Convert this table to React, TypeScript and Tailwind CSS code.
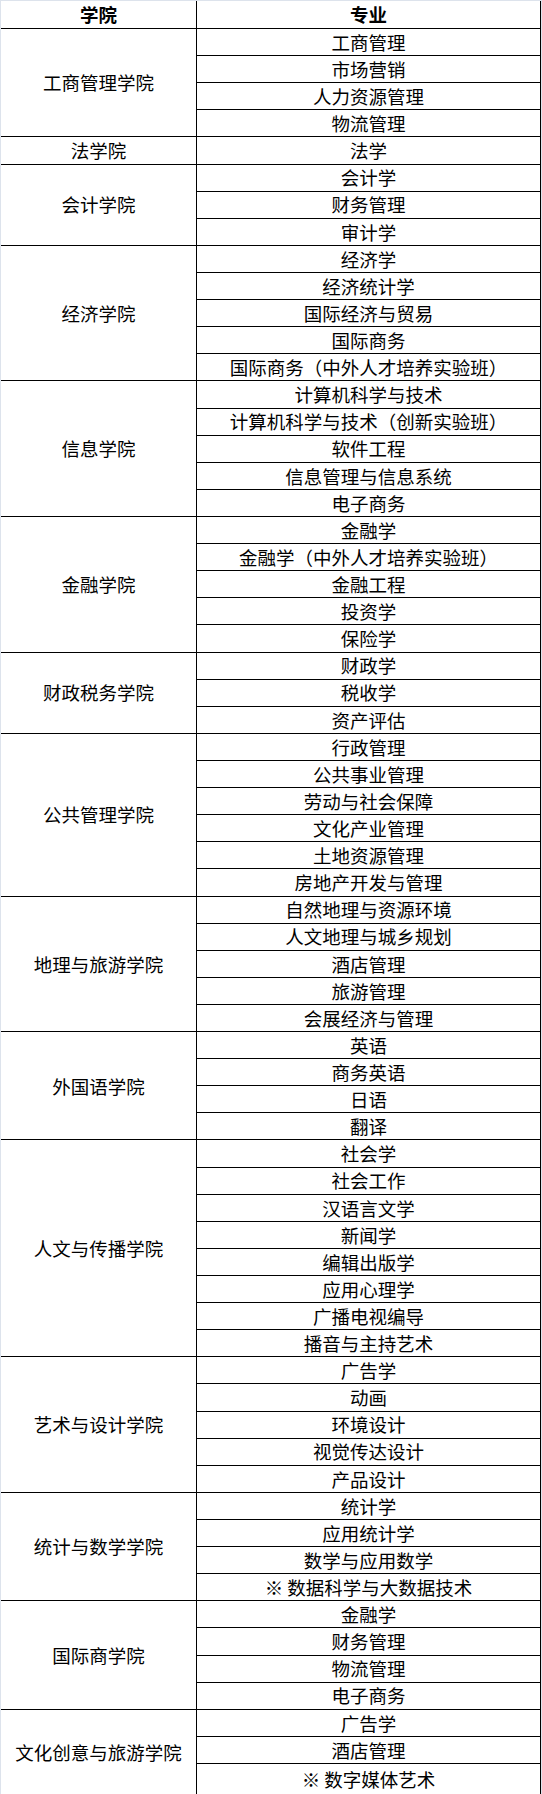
const groups: { college: string; majors: string[] }[] = [
  { college: "工商管理学院", majors: ["工商管理", "市场营销", "人力资源管理", "物流管理"] },
  { college: "法学院", majors: ["法学"] },
  { college: "会计学院", majors: ["会计学", "财务管理", "审计学"] },
  {
    college: "经济学院",
    majors: ["经济学", "经济统计学", "国际经济与贸易", "国际商务", "国际商务（中外人才培养实验班）"],
  },
  {
    college: "信息学院",
    majors: ["计算机科学与技术", "计算机科学与技术（创新实验班）", "软件工程", "信息管理与信息系统", "电子商务"],
  },
  {
    college: "金融学院",
    majors: ["金融学", "金融学（中外人才培养实验班）", "金融工程", "投资学", "保险学"],
  },
  { college: "财政税务学院", majors: ["财政学", "税收学", "资产评估"] },
  {
    college: "公共管理学院",
    majors: ["行政管理", "公共事业管理", "劳动与社会保障", "文化产业管理", "土地资源管理", "房地产开发与管理"],
  },
  {
    college: "地理与旅游学院",
    majors: ["自然地理与资源环境", "人文地理与城乡规划", "酒店管理", "旅游管理", "会展经济与管理"],
  },
  { college: "外国语学院", majors: ["英语", "商务英语", "日语", "翻译"] },
  {
    college: "人文与传播学院",
    majors: ["社会学", "社会工作", "汉语言文学", "新闻学", "编辑出版学", "应用心理学", "广播电视编导", "播音与主持艺术"],
  },
  { college: "艺术与设计学院", majors: ["广告学", "动画", "环境设计", "视觉传达设计", "产品设计"] },
  { college: "统计与数学学院", majors: ["统计学", "应用统计学", "数学与应用数学", "※ 数据科学与大数据技术"] },
  { college: "国际商学院", majors: ["金融学", "财务管理", "物流管理", "电子商务"] },
  { college: "文化创意与旅游学院", majors: ["广告学", "酒店管理", "※ 数字媒体艺术"] },
];

export default function App() {
  return (
    <div
      className="w-[542px] h-[1794px] overflow-hidden bg-[#dde3ec] pt-px px-px text-black text-[18.5px] leading-none"
      style={{ fontFamily: '"Noto Sans CJK SC", "Noto Sans", sans-serif' }}
    >
      <div className="bg-white border-r border-black min-h-full">
        <div className="flex h-[28px] border-b border-black font-bold">
          <div className="w-[196px] shrink-0 border-r border-black flex items-center justify-center">学院</div>
          <div className="flex-1 flex items-center justify-center">专业</div>
        </div>
        {groups.map((g, gi) => {
          const last = gi === groups.length - 1;
          return (
            <div key={g.college} className="flex">
              <div
                className={
                  last
                    ? "w-[196px] shrink-0 border-r border-black flex items-center justify-center"
                    : "w-[196px] shrink-0 border-r border-b border-black flex items-center justify-center"
                }
              >
                {g.college}
              </div>
              <div className="flex-1 flex flex-col">
                {g.majors.map((m, mi) => (
                  <div
                    key={mi}
                    className={
                      last && mi === g.majors.length - 1
                        ? "h-[30px] flex items-center justify-center"
                        : "h-[27.12px] border-b border-black flex items-center justify-center"
                    }
                  >
                    {m}
                  </div>
                ))}
              </div>
            </div>
          );
        })}
      </div>
    </div>
  );
}
